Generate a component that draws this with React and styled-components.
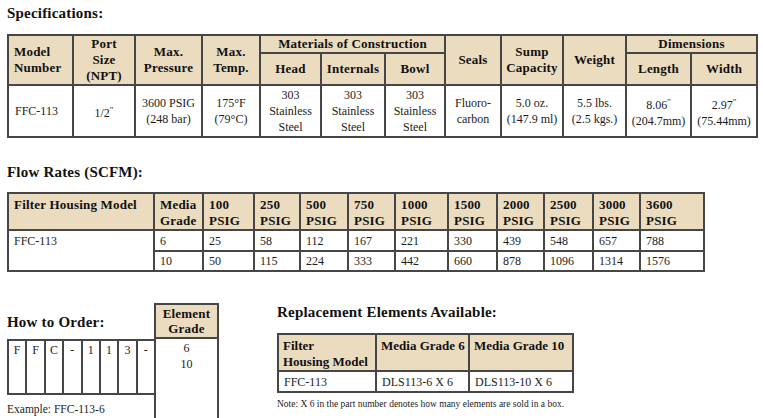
import React from "react";
import styled, { createGlobalStyle } from "styled-components";

const TAN = "#ebdcc0";
const LINE = "#464646";

const Global = createGlobalStyle`
  html, body { margin: 0; padding: 0; background: #fff; }
  body { font-family: "Liberation Serif", "Times New Roman", serif; color: #1c1c1c; }
`;

const Page = styled.div`
  width: 763px;
  height: 418px;
  overflow: hidden;
  padding-left: 7px;
  box-sizing: border-box;
`;

const SectionTitle = styled.h2`
  margin: ${(p) => p.$mt}px 0 ${(p) => p.$mb}px 0;
  font-size: 15px;
  line-height: 18px;
  font-weight: bold;
  color: #111;
  letter-spacing: 0.2px;
  white-space: nowrap;
`;

const Table = styled.table`
  border-collapse: collapse;
  table-layout: fixed;
  width: ${(p) => p.$w}px;
  border: 2px solid ${LINE};
`;

const Col = styled.col`
  width: ${(p) => p.$w}px;
`;

const Row = styled.tr`
  height: ${(p) => p.$h}px;
`;

const Head = styled.th`
  background: ${TAN};
  border: 2px solid ${LINE};
  font-size: 13px;
  line-height: 16px;
  font-weight: bold;
  color: #111;
  letter-spacing: ${(p) => (p.$tight ? "0" : "0.2px")};
  text-align: ${(p) => p.$align || "center"};
  vertical-align: ${(p) => p.$valign || "middle"};
  padding: ${(p) => p.$pad || "0 3px"};
  white-space: ${(p) => (p.$nowrap ? "nowrap" : "normal")};
`;

const Cell = styled.td`
  border: 2px solid ${LINE};
  font-size: 12px;
  line-height: 16px;
  color: #1c1c1c;
  text-align: ${(p) => p.$align || "center"};
  vertical-align: ${(p) => p.$valign || "middle"};
  padding: ${(p) => p.$pad || "0 3px"};
  white-space: nowrap;
`;

const Inch = styled.span`
  font-size: 9px;
  vertical-align: 4px;
`;

const BottomRow = styled.div`
  display: flex;
  align-items: flex-start;
  gap: 58px;
  margin-top: 31px;
`;

const OrderBlock = styled.div`
  display: flex;
  align-items: flex-start;
`;

const OrderLeft = styled.div`
  width: 147px;
  display: flex;
  flex-direction: column;
`;

const OrderTitle = styled.h2`
  margin: 0;
  height: 36px;
  display: flex;
  align-items: center;
  padding-top: 2px;
  box-sizing: border-box;
  font-size: 15px;
  font-weight: bold;
  color: #111;
  letter-spacing: 0.2px;
  white-space: nowrap;
`;

const Boxes = styled.div`
  display: flex;
  height: 52px;
  border: 2px solid ${LINE};
  border-right: none;
`;

const LetterBox = styled.div`
  flex: 1;
  text-align: center;
  font-size: 12px;
  line-height: 16px;
  padding-top: 1px;
  border-right: ${(p) => (p.$last ? "none" : `2px solid ${LINE}`)};
`;

const Example = styled.div`
  margin-top: 7px;
  font-size: 11.5px;
  line-height: 14px;
  white-space: nowrap;
`;

const GradeCol = styled.div`
  width: 65px;
  box-sizing: border-box;
  border: 2px solid ${LINE};
  border-bottom: none;
  display: flex;
  flex-direction: column;
`;

const GradeHead = styled.div`
  height: 34px;
  background: ${TAN};
  border-bottom: 2px solid ${LINE};
  font-size: 13px;
  line-height: 15px;
  font-weight: bold;
  color: #111;
  text-align: center;
  padding-top: 1px;
  box-sizing: border-box;
  letter-spacing: 0.2px;
`;

const GradeBody = styled.div`
  height: 90px;
  text-align: center;
  font-size: 12px;
  line-height: 16px;
  padding-top: 1px;
`;

const ReplaceBlock = styled.div`
  display: flex;
  flex-direction: column;
`;

const Note = styled.div`
  margin-top: 5px;
  font-size: 9.5px;
  line-height: 12px;
  color: #222;
  white-space: nowrap;
`;

const specCols = [65, 62, 67, 58, 61, 64, 60, 56, 62, 63, 65, 66];
const flowCols = [146, 49, 51, 46, 48, 47, 53, 49, 47, 49, 47, 64];
const pressures = ["100", "250", "500", "750", "1000", "1500", "2000", "2500", "3000", "3600"];
const flow6 = [25, 58, 112, 167, 221, 330, 439, 548, 657, 788];
const flow10 = [50, 115, 224, 333, 442, 660, 878, 1096, 1314, 1576];
const letters = ["F", "F", "C", "-", "1", "1", "3", "-"];

export default function App() {
  return (
    <Page>
      <Global />
      <SectionTitle $mt={4} $mb={12}>Specifications:</SectionTitle>
      <Table $w={751}>
        <colgroup>
          {specCols.map((w, i) => (
            <Col key={i} $w={w} />
          ))}
        </colgroup>
        <thead>
          <Row $h={17}>
            <Head rowSpan={2} $align="left" $pad="0 5px">Model<br />Number</Head>
            <Head rowSpan={2}>Port<br />Size<br />(NPT)</Head>
            <Head rowSpan={2}>Max.<br />Pressure</Head>
            <Head rowSpan={2}>Max.<br />Temp.</Head>
            <Head colSpan={3}>Materials of Construction</Head>
            <Head rowSpan={2}>Seals</Head>
            <Head rowSpan={2}>Sump<br />Capacity</Head>
            <Head rowSpan={2}>Weight</Head>
            <Head colSpan={2}>Dimensions</Head>
          </Row>
          <Row $h={31}>
            <Head>Head</Head>
            <Head>Internals</Head>
            <Head>Bowl</Head>
            <Head>Length</Head>
            <Head>Width</Head>
          </Row>
        </thead>
        <tbody>
          <Row $h={52}>
            <Cell $align="left" $pad="0 6px">FFC-113</Cell>
            <Cell>1/2<Inch>″</Inch></Cell>
            <Cell>3600 PSIG<br />(248 bar)</Cell>
            <Cell>175°F<br />(79°C)</Cell>
            <Cell>303<br />Stainless<br />Steel</Cell>
            <Cell>303<br />Stainless<br />Steel</Cell>
            <Cell>303<br />Stainless<br />Steel</Cell>
            <Cell>Fluoro-<br />carbon</Cell>
            <Cell>5.0 oz.<br />(147.9 ml)</Cell>
            <Cell>5.5 lbs.<br />(2.5 kgs.)</Cell>
            <Cell>8.06<Inch>″</Inch><br />(204.7mm)</Cell>
            <Cell>2.97<Inch>″</Inch><br />(75.44mm)</Cell>
          </Row>
        </tbody>
      </Table>

      <SectionTitle $mt={25} $mb={11}>Flow Rates (SCFM):</SectionTitle>
      <Table $w={698}>
        <colgroup>
          {flowCols.map((w, i) => (
            <Col key={i} $w={w} />
          ))}
        </colgroup>
        <thead>
          <Row $h={37}>
            <Head $align="left" $valign="top" $pad="3px 5px 0" $nowrap>Filter Housing Model</Head>
            <Head $align="left" $valign="top" $pad="3px 5px 0">Media<br />Grade</Head>
            {pressures.map((p) => (
              <Head key={p} $align="left" $valign="top" $pad="3px 5px 0">
                {p}<br />PSIG
              </Head>
            ))}
          </Row>
        </thead>
        <tbody>
          <Row $h={21}>
            <Cell rowSpan={2} $align="left" $valign="top" $pad="2px 5px 0">FFC-113</Cell>
            <Cell $align="left" $pad="0 5px">6</Cell>
            {flow6.map((v, i) => (
              <Cell key={i} $align="left" $pad="0 5px">{v}</Cell>
            ))}
          </Row>
          <Row $h={20}>
            <Cell $align="left" $pad="0 5px">10</Cell>
            {flow10.map((v, i) => (
              <Cell key={i} $align="left" $pad="0 5px">{v}</Cell>
            ))}
          </Row>
        </tbody>
      </Table>

      <BottomRow>
        <OrderBlock>
          <OrderLeft>
            <OrderTitle>How to Order:</OrderTitle>
            <Boxes>
              {letters.map((l, i) => (
                <LetterBox key={i} $last={i === letters.length - 1}>{l}</LetterBox>
              ))}
            </Boxes>
            <Example>Example: FFC-113-6</Example>
          </OrderLeft>
          <GradeCol>
            <GradeHead>Element<br />Grade</GradeHead>
            <GradeBody>6<br />10</GradeBody>
          </GradeCol>
        </OrderBlock>

        <ReplaceBlock>
          <SectionTitle $mt={0} $mb={12}>Replacement Elements Available:</SectionTitle>
          <Table $w={297}>
            <colgroup>
              <Col $w={98} />
              <Col $w={93} />
              <Col $w={104} />
            </colgroup>
            <thead>
              <Row $h={36}>
                <Head $align="left" $valign="top" $pad="3px 4px 0" $nowrap $tight>Filter<br />Housing Model</Head>
                <Head $align="left" $valign="top" $pad="3px 4px 0" $nowrap $tight>Media Grade 6</Head>
                <Head $align="left" $valign="top" $pad="3px 4px 0" $nowrap $tight>Media Grade 10</Head>
              </Row>
            </thead>
            <tbody>
              <Row $h={21}>
                <Cell $align="left" $pad="0 5px">FFC-113</Cell>
                <Cell $align="left" $pad="0 5px">DLS113-6 X 6</Cell>
                <Cell $align="left" $pad="0 5px">DLS113-10 X 6</Cell>
              </Row>
            </tbody>
          </Table>
          <Note>Note: X 6 in the part number denotes how many elements are sold in a box.</Note>
        </ReplaceBlock>
      </BottomRow>
    </Page>
  );
}
